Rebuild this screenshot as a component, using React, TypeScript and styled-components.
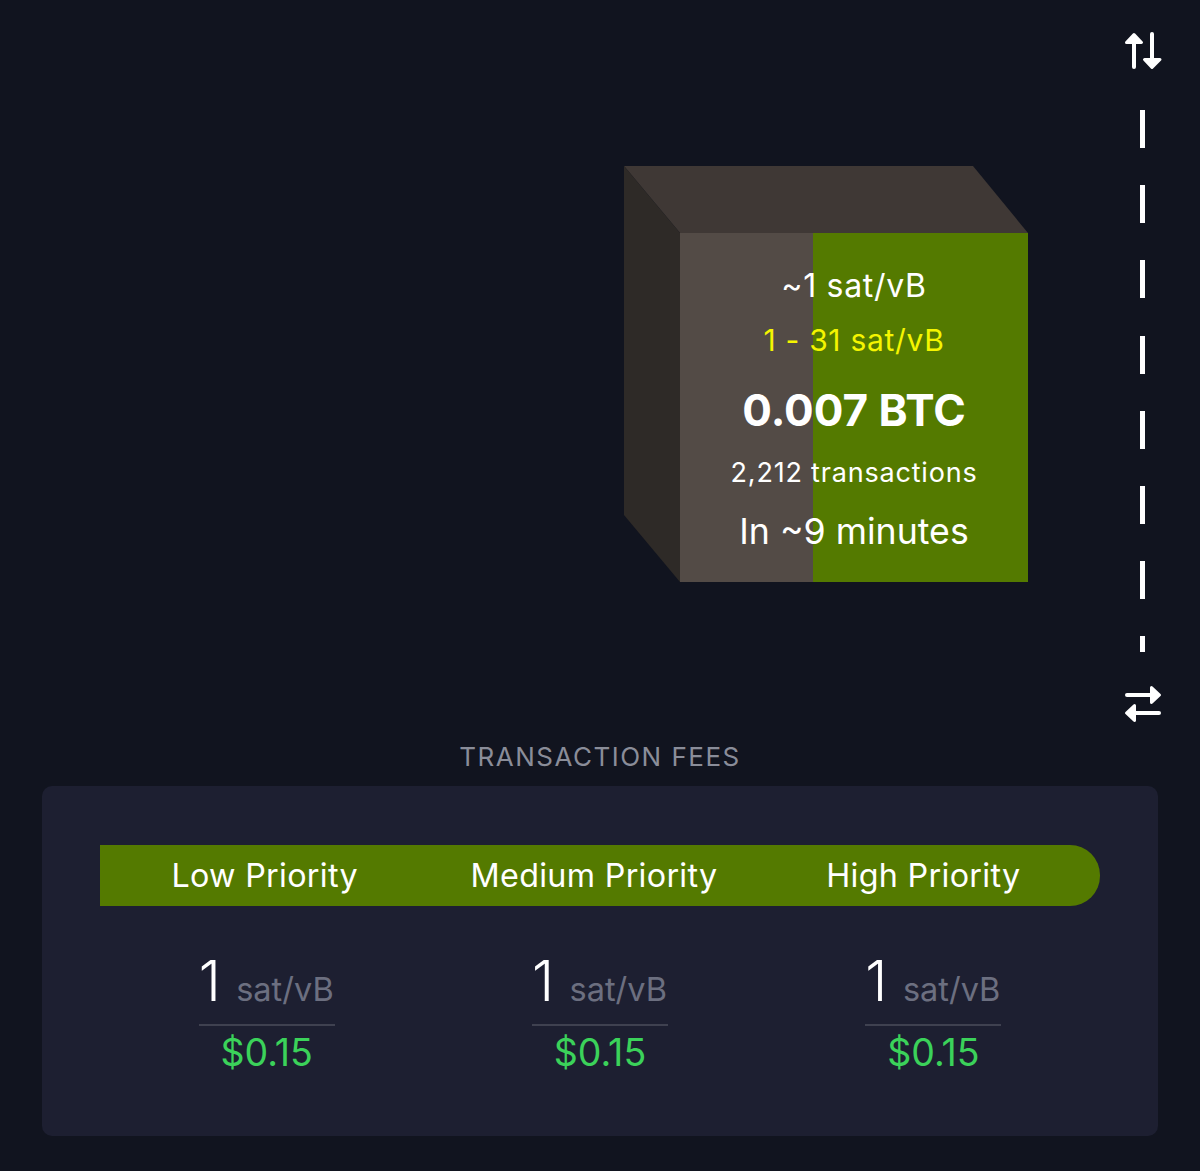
import styled, { createGlobalStyle } from "styled-components";

const GlobalStyle = createGlobalStyle`
  html, body {
    margin: 0;
    padding: 0;
    background: #11141f;
  }
  * {
    box-sizing: border-box;
  }
`;

const Page = styled.div`
  width: 1200px;
  height: 1171px;
  background: #11141f;
  color: #fff;
  font-family: Inter, "Liberation Sans", sans-serif;
  overflow: hidden;
`;

const Top = styled.div`
  display: flex;
  justify-content: flex-end;
  height: 740px;
  padding: 32px 38px 0 0;
`;

const Cube = styled.div`
  display: grid;
  grid-template-columns: 56px 348px;
  grid-template-rows: 67px 349px;
  width: 404px;
  height: 416px;
  margin: 134px 96px 0 0;
`;

const CubeTop = styled.div`
  grid-column: 1 / 3;
  grid-row: 1;
  background: #3f3835;
  clip-path: polygon(0 0, 349px 0, 100% 100%, 56px 100%);
`;

const CubeSide = styled.div`
  grid-column: 1;
  grid-row: 1 / 3;
  background: #2e2a27;
  clip-path: polygon(0 0, 100% 67px, 100% 100%, 0 349px);
`;

const CubeFront = styled.div<{ $fill: number }>`
  grid-column: 2;
  grid-row: 2;
  display: flex;
  flex-direction: column;
  align-items: center;
  padding-top: 33px;
  background: linear-gradient(
    to right,
    #534b46 ${(p) => p.$fill}%,
    #547a00 ${(p) => p.$fill}%
  );
`;

const FeeLine = styled.div`
  font-size: 32px;
  line-height: 40px;
  letter-spacing: 0.7px;
  white-space: nowrap;
`;

const RangeLine = styled.div`
  margin-top: 14px;
  font-size: 30px;
  line-height: 40px;
  letter-spacing: 0.7px;
  color: #f5f500;
  white-space: nowrap;
`;

const SizeLine = styled.div`
  margin-top: 23px;
  font-size: 44px;
  line-height: 54px;
  font-weight: 700;
  white-space: nowrap;
`;

const CountLine = styled.div`
  margin-top: 18px;
  font-size: 27px;
  line-height: 36px;
  letter-spacing: 0.8px;
  white-space: nowrap;
`;

const EtaLine = styled.div`
  margin-top: 18px;
  font-size: 35.7px;
  line-height: 44px;
  white-space: nowrap;
`;

const Toggle = styled.div`
  display: flex;
  flex-direction: column;
  align-items: center;
  width: 38px;
`;

const Dashes = styled.div`
  width: 5px;
  height: 542px;
  margin: 40px 1px 33px 0;
  background: repeating-linear-gradient(
    to bottom,
    #fff 0,
    #fff 38px,
    transparent 38px,
    transparent 75.2px
  );
`;

const Icon = styled.svg`
  display: block;
  width: 38px;
  height: 38px;
  fill: #fff;
  stroke: #fff;
  stroke-linecap: round;
  stroke-linejoin: round;
`;

const Title = styled.div`
  height: 46px;
  font-size: 26px;
  line-height: 34px;
  letter-spacing: 1.5px;
  text-align: center;
  color: #8a8d99;
`;

const Card = styled.div`
  width: 1116px;
  height: 350px;
  margin-left: 42px;
  padding: 59px 58px 0;
  background: #1d1f31;
  border-radius: 10px;
`;

const Tabs = styled.div`
  display: grid;
  grid-template-columns: repeat(3, 1fr);
  align-items: center;
  height: 61px;
  padding: 0 12px 1px 0;
  background: #547a00;
  border-radius: 0 30px 30px 0;
`;

const Tab = styled.div`
  font-size: 32.3px;
  letter-spacing: 0.3px;
  text-align: center;
  white-space: nowrap;
`;

const Columns = styled.div`
  display: grid;
  grid-template-columns: repeat(3, 1fr);
  margin-top: 42px;
`;

const Column = styled.div`
  display: flex;
  flex-direction: column;
  align-items: center;
`;

const Rate = styled.div`
  display: flex;
  align-items: baseline;
  justify-content: space-between;
  width: 136px;
  height: 78px;
  padding-top: 2px;
  border-bottom: 2px solid #3f4150;
`;

const RateValue = styled.span`
  font-size: 56px;
  line-height: 62px;
  font-weight: 300;
`;

const RateUnit = styled.span`
  font-size: 32.5px;
  padding-right: 1px;
  color: #6c6f80;
`;

const Price = styled.div`
  margin-top: 5px;
  font-size: 37.5px;
  line-height: 44px;
  color: #3bd25a;
`;

const priorities = ["Low Priority", "Medium Priority", "High Priority"];

function App() {
  return (
    <Page>
      <GlobalStyle />
      <Top>
        <Cube>
          <CubeTop />
          <CubeSide />
          <CubeFront $fill={38.2}>
            <FeeLine>~1 sat/vB</FeeLine>
            <RangeLine>1 - 31 sat/vB</RangeLine>
            <SizeLine>0.007 BTC</SizeLine>
            <CountLine>2,212 transactions</CountLine>
            <EtaLine>In ~9 minutes</EtaLine>
          </CubeFront>
        </Cube>
        <Toggle>
          <Icon viewBox="0 0 38 38">
            <path d="M10 11V35" strokeWidth="4" />
            <path d="M10 2.5L17.5 10.5H2.5Z" strokeWidth="3" />
            <path d="M28 2V27" strokeWidth="4" />
            <path d="M20.5 27.5H36L28 35.5Z" strokeWidth="3" />
          </Icon>
          <Dashes />
          <Icon viewBox="0 0 38 38">
            <path d="M3 10H27" strokeWidth="4" />
            <path d="M27.5 2.5L35.5 10L27.5 17.5Z" strokeWidth="3" />
            <path d="M11 28H35" strokeWidth="4" />
            <path d="M10.5 20.5L2.5 28L10.5 35.5Z" strokeWidth="3" />
          </Icon>
        </Toggle>
      </Top>
      <Title>TRANSACTION FEES</Title>
      <Card>
        <Tabs>
          {priorities.map((p) => (
            <Tab key={p}>{p}</Tab>
          ))}
        </Tabs>
        <Columns>
          {priorities.map((p) => (
            <Column key={p}>
              <Rate>
                <RateValue>1</RateValue>
                <RateUnit>sat/vB</RateUnit>
              </Rate>
              <Price>$0.15</Price>
            </Column>
          ))}
        </Columns>
      </Card>
    </Page>
  );
}

export default App;
